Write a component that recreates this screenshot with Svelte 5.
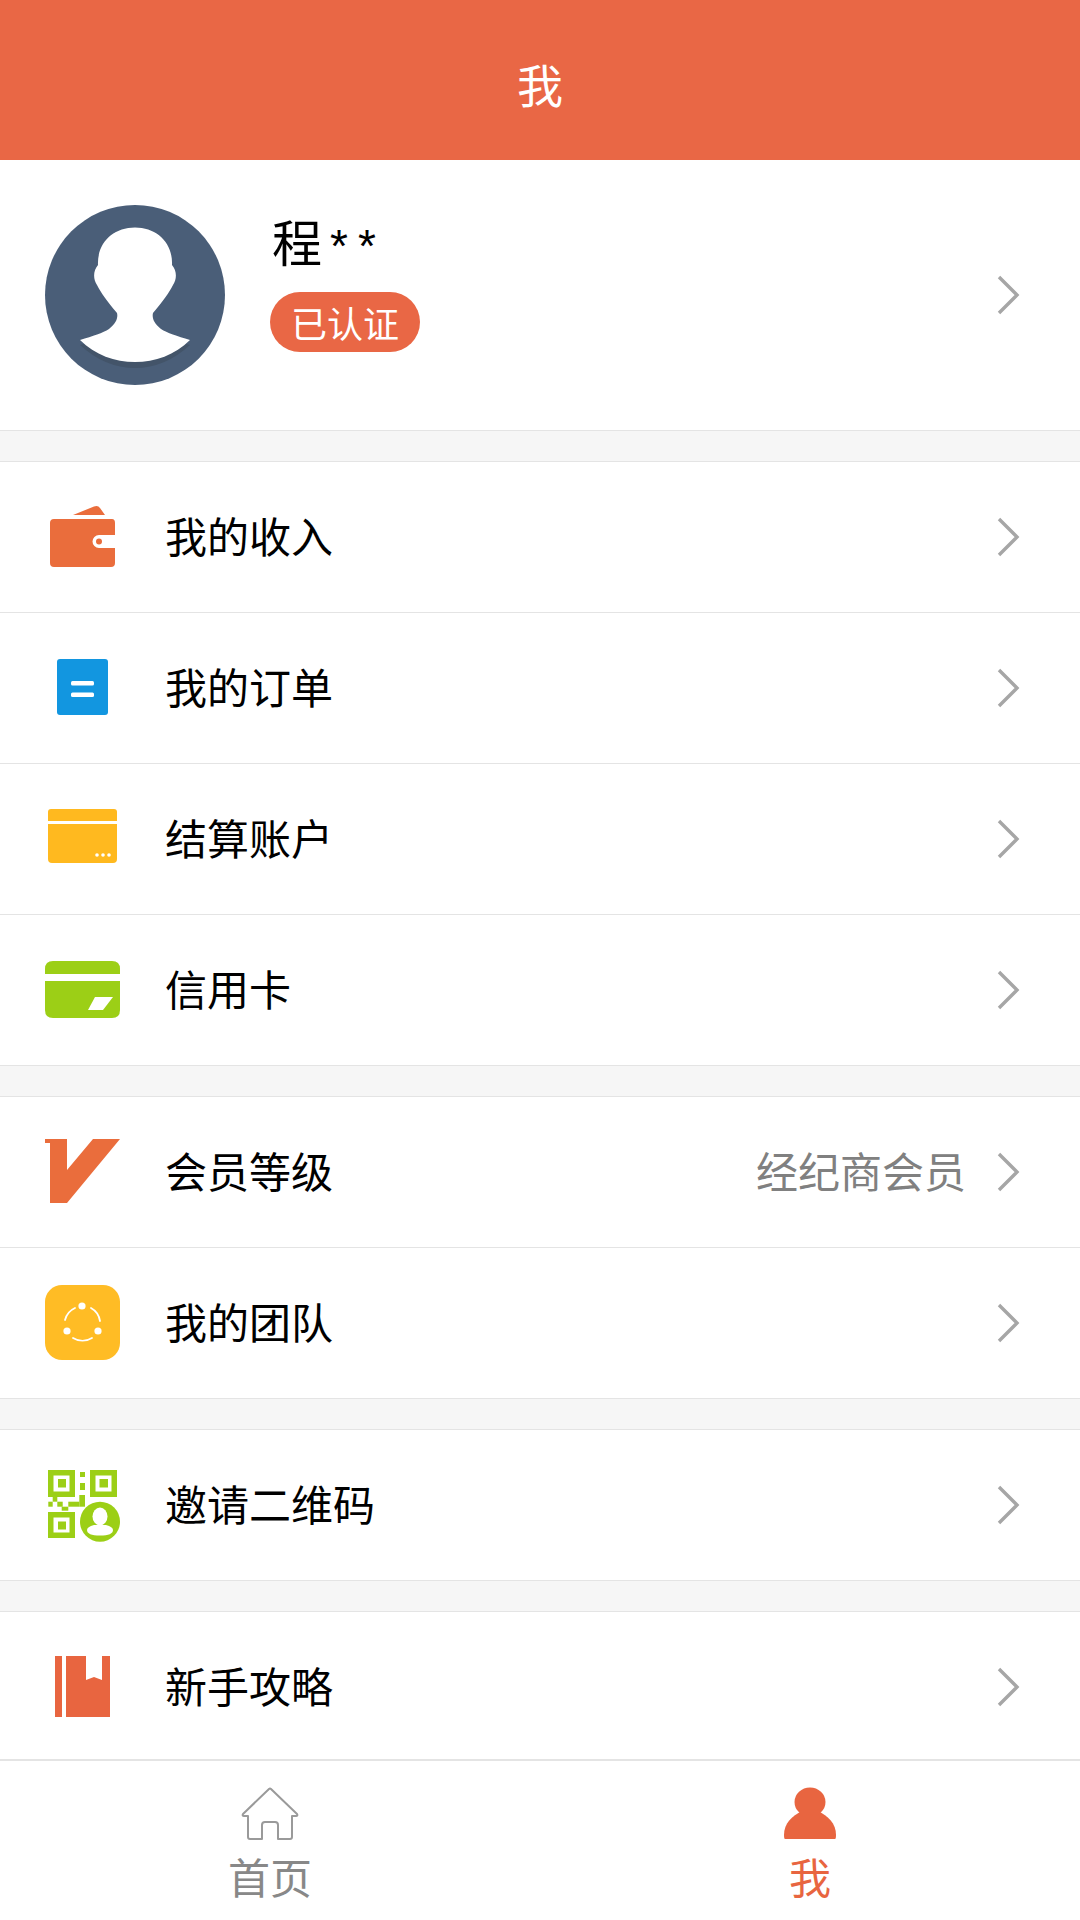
<script>
  const sections = [
    [
      { icon: 'wallet', label: '我的收入' },
      { icon: 'doc', label: '我的订单' },
      { icon: 'account', label: '结算账户' },
      { icon: 'card', label: '信用卡' }
    ],
    [
      { icon: 'vip', label: '会员等级', value: '经纪商会员' },
      { icon: 'team', label: '我的团队' }
    ],
    [{ icon: 'qr', label: '邀请二维码' }],
    [{ icon: 'book', label: '新手攻略' }]
  ];
</script>

{#snippet chevron()}
  <svg class="chev" width="24" height="40" viewBox="0 0 24 40" aria-hidden="true">
    <path d="M3 2 L21 20 L3 38" fill="none" stroke="#a6a6a6" stroke-width="3.4" />
  </svg>
{/snippet}

{#snippet rowIcon(name)}
  <svg class="ic" width="80" height="80" viewBox="0 0 80 80" aria-hidden="true">
    {#if name === 'wallet'}
      <path d="M31 18 L52 9.5 Q56 8 58 11 L63 18 Z" fill="#ea6d3c" />
      <path d="M8 26 Q8 22 12 22 H70 Q73 22 73 26 V38 H57 A6.5 6.5 0 0 0 57 51 H73 V66 Q73 70 69 70 H12 Q8 70 8 66 Z" fill="#ea6d3c" />
      <circle cx="57" cy="44.5" r="3" fill="#ea6d3c" />
    {:else if name === 'doc'}
      <rect x="15" y="11" width="51" height="56" rx="3" fill="#1296e0" />
      <rect x="29" y="33" width="23" height="4.5" rx="1.5" fill="#fff" />
      <rect x="29" y="44.5" width="23" height="4.5" rx="1.5" fill="#fff" />
    {:else if name === 'account'}
      <path d="M6 22 V13 Q6 10 9 10 H72 Q75 10 75 13 V22 Z" fill="#ffb91f" />
      <path d="M6 25 H75 V60 Q75 64 71 64 H10 Q6 64 6 60 Z" fill="#ffb91f" />
      <circle cx="55" cy="56" r="1.8" fill="#fff" />
      <circle cx="61" cy="56" r="1.8" fill="#fff" />
      <circle cx="67" cy="56" r="1.8" fill="#fff" />
    {:else if name === 'card'}
      <path d="M3 24 V19 Q3 11 11 11 H70 Q78 11 78 19 V24 Z" fill="#9ccf16" />
      <path d="M3 31 H78 V60 Q78 68 70 68 H11 Q3 68 3 60 Z" fill="#9ccf16" />
      <path d="M46 60 H61 L71 47 H53 Z" fill="#fff" />
    {:else if name === 'vip'}
      <path d="M3 7 H25 V38 L51 7 H78 L25 71 H8 V11 H3 Z" fill="#ea6d3c" />
    {:else if name === 'team'}
      <rect x="3" y="2" width="75" height="75" rx="17" fill="#ffbc25" />
      <circle cx="40" cy="23" r="3.6" fill="#fff" />
      <circle cx="25" cy="48" r="3.6" fill="#fff" />
      <circle cx="56" cy="48" r="3.6" fill="#fff" />
      <g fill="none" stroke="#fff" stroke-width="1.8" stroke-linecap="round">
        <path d="M23 37 A18 18 0 0 1 33 25" />
        <path d="M49 25 A18 18 0 0 1 58 38" />
        <path d="M31 55 A18 18 0 0 0 50 55" />
      </g>
    {:else if name === 'qr'}
      <g fill="#9ccf16">
        <path fill-rule="evenodd" d="M6 5 H33 V32 H6 Z M11.5 10.5 V26.5 H27.5 V10.5 Z" />
        <rect x="16" y="14" width="8" height="8.5" />
        <path fill-rule="evenodd" d="M48 5 H75 V32 H48 Z M53.5 10.5 V26.5 H69.5 V10.5 Z" />
        <rect x="57.5" y="14" width="8.5" height="8.5" />
        <path fill-rule="evenodd" d="M6 47 H33 V73 H6 Z M11.5 52.5 V67.5 H27.5 V52.5 Z" />
        <rect x="16" y="56.5" width="8" height="8" />
        <rect x="38" y="7" width="5" height="5" />
        <rect x="38" y="18" width="5" height="7" />
        <rect x="37.3" y="30" width="5.7" height="11.7" />
        <rect x="10.7" y="32" width="4.6" height="4.7" />
        <rect x="6.3" y="36.7" width="4.4" height="5" />
        <rect x="15.3" y="36.7" width="5.4" height="5" />
        <rect x="26.3" y="36.7" width="11" height="5" />
        <rect x="19.7" y="41.7" width="6.6" height="4" />
        <circle cx="58" cy="56.7" r="20" />
      </g>
      <ellipse cx="58" cy="51.5" rx="7.5" ry="9" fill="#fff" />
      <path d="M45 65 Q45 62 52 60 H64 Q71 62 71 65 Q71 70.5 58 70.5 Q45 70.5 45 65 Z" fill="#fff" />
    {:else if name === 'book'}
      <rect x="13" y="9" width="7" height="61" fill="#e86540" />
      <path d="M24 9 H44 V33 L52 30 L60 33 V9 H68 V70 H24 Z" fill="#e86540" />
    {/if}
  </svg>
{/snippet}

<div class="page">
  <header class="top">我</header>

  <main class="content">
    <section class="profile">
      <svg class="avatar" width="180" height="180" viewBox="0 0 180 180" aria-hidden="true">
        <circle cx="90" cy="90" r="90" fill="#4a5e78" />
        <path d="M35 140 Q62 133 72 115 H108 Q118 133 145 140 Q120 163 90 163 Q60 163 35 140 Z" fill="#435469" />
        <path d="M35 135 C48 131 58 128 64 124 C72 118 73 112 72 108 C62 96 56 88 52 80 C48 74 48 66 53 60 C52 38 68 22.5 90 22.5 C112 22.5 128 38 127 60 C132 66 132 74 128 80 C124 88 118 96 108 108 C107 112 108 118 116 124 C122 128 132 131 145 135 C130 150 110 157 90 157 C70 157 50 150 35 135 Z" fill="#fff" />
      </svg>
      <div class="who">
        <div class="name">程<span class="stars">**</span></div>
        <div class="badge">已认证</div>
      </div>
      {@render chevron()}
    </section>

    {#each sections as rows, i}
      <section class="group" class:last={i === sections.length - 1}>
        {#each rows as row}
          <div class="row">
            {@render rowIcon(row.icon)}
            <span class="label">{row.label}</span>
            {#if row.value}<span class="value">{row.value}</span>{/if}
            {@render chevron()}
          </div>
        {/each}
      </section>
    {/each}
  </main>

  <nav class="tabs">
    <div class="tab">
      <svg width="60" height="54" viewBox="0 0 60 54" aria-hidden="true">
        <path d="M29 2 Q30 1 31 2 L57 27 Q58 29 56 29 L52 29 V50 Q52 52 50 52 H38 V38 Q38 35 35 35 H25 Q22 35 22 38 V52 H10 Q8 52 8 50 V29 L4 29 Q2 29 3 27 Z" fill="none" stroke="#9a9a9a" stroke-width="2" stroke-linejoin="round" />
      </svg>
      <span>首页</span>
    </div>
    <div class="tab active">
      <svg width="60" height="54" viewBox="0 0 60 54" aria-hidden="true">
        <ellipse cx="30" cy="15" rx="15.5" ry="14.5" fill="#e86540" />
        <path d="M5 52 Q4 52 4 48 C4 36 12 29 22 24 H38 C48 29 56 36 56 48 Q56 52 55 52 Z" fill="#e86540" />
      </svg>
      <span>我</span>
    </div>
  </nav>
</div>

<style>
  :global(body) {
    margin: 0;
    background: #f6f6f6;
  }
  .page {
    width: 1080px;
    height: 1920px;
    display: flex;
    flex-direction: column;
    overflow: hidden;
    font-family: "Noto Sans CJK SC", "Noto Sans", sans-serif;
    font-weight: 400;
    color: #000;
  }
  .top {
    height: 160px;
    box-sizing: border-box;
    padding-top: 5px;
    flex: none;
    background: #e96745;
    color: #fff;
    font-size: 46px;
    display: flex;
    align-items: center;
    justify-content: center;
  }
  .content {
    flex: 1;
    min-height: 0;
    overflow: hidden;
  }
  .profile {
    height: 270px;
    background: #fff;
    border-bottom: 1px solid #e4e4e4;
    display: flex;
    align-items: center;
    padding: 0 60px 0 45px;
  }
  .avatar {
    flex: none;
  }
  .who {
    margin-left: 45px;
    flex: 1;
    padding-bottom: 24px;
  }
  .name {
    font-size: 50px;
    line-height: 60px;
    padding-left: 2px;
    margin-top: -4px;
  }
  .stars {
    font-family: "Liberation Sans", sans-serif;
    font-size: 46px;
    letter-spacing: 10px;
    margin-left: 8px;
  }
  .badge {
    margin-top: 16px;
    width: 150px;
    height: 60px;
    border-radius: 30px;
    background: #e96745;
    color: #fff;
    font-size: 36px;
    display: flex;
    align-items: center;
    justify-content: center;
  }
  .group {
    margin-top: 30px;
    background: #fff;
    border-top: 1px solid #e4e4e4;
  }
  .row {
    height: 150px;
    border-bottom: 1px solid #e4e4e4;
    display: flex;
    align-items: center;
    padding: 0 60px 0 42px;
  }
  .group.last .row {
    border-bottom: none;
  }
  .ic {
    flex: none;
  }
  .label {
    margin-left: 43px;
    padding-bottom: 5px;
    font-size: 42px;
    flex: 1;
  }
  .value {
    font-size: 42px;
    padding-bottom: 5px;
    color: #808080;
    margin-right: 30px;
  }
  .chev {
    flex: none;
  }
  .tabs {
    flex: none;
    height: 159px;
    background: #fff;
    border-top: 2px solid #e4e4e4;
    display: flex;
  }
  .tab {
    flex: 1;
    display: flex;
    flex-direction: column;
    align-items: center;
    padding-top: 26px;
    color: #888;
    font-size: 42px;
    line-height: 56px;
  }
  .tab svg {
    margin-bottom: 7px;
  }
  .tab.active {
    color: #e86540;
  }
</style>
